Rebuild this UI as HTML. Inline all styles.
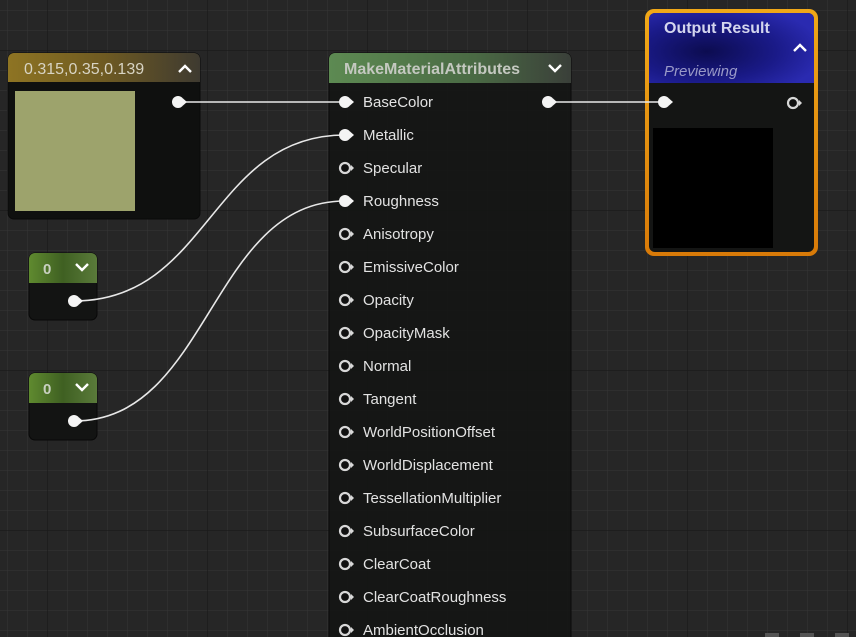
<!DOCTYPE html>
<html><head><meta charset="utf-8"><style>
html,body{margin:0;padding:0;background:#262626;}
svg{display:block;font-family:"Liberation Sans",sans-serif;}
</style></head><body>
<svg width="856" height="637" viewBox="0 0 856 637" xmlns="http://www.w3.org/2000/svg">
<defs>
<pattern id="minor" x="7" y="10" width="20" height="20" patternUnits="userSpaceOnUse">
<path d="M0 0H20M0 0V20" stroke="#363636" stroke-width="1" fill="none"/>
</pattern>
<pattern id="major" x="47" y="50" width="160" height="160" patternUnits="userSpaceOnUse">
<path d="M0 0H160M0 0V160" stroke="#191919" stroke-width="1.2" fill="none"/>
</pattern>
<linearGradient id="gold" x1="0" y1="0" x2="1" y2="0">
<stop offset="0" stop-color="#8e7423"/><stop offset="0.5" stop-color="#6e5a22"/><stop offset="1" stop-color="#3e3a30"/>
</linearGradient>
<linearGradient id="green" x1="0" y1="0" x2="1" y2="0">
<stop offset="0" stop-color="#5d8a52"/><stop offset="0.6" stop-color="#4a6a44"/><stop offset="1" stop-color="#3a3f39"/>
</linearGradient>
<linearGradient id="lgreen" x1="0" y1="0" x2="1" y2="0">
<stop offset="0" stop-color="#5f8a2f"/><stop offset="0.5" stop-color="#3f6022"/><stop offset="1" stop-color="#5a7a3a"/>
</linearGradient>
<radialGradient id="blue" cx="0.35" cy="0.55" r="0.7">
<stop offset="0" stop-color="#0c0c50"/><stop offset="0.6" stop-color="#1a1a88"/><stop offset="1" stop-color="#2a2ab0"/>
</radialGradient>
<linearGradient id="orange" x1="0" y1="0" x2="0" y2="1">
<stop offset="0" stop-color="#f0a818"/><stop offset="1" stop-color="#d87a08"/>
</linearGradient>
</defs>
<rect width="856" height="637" fill="#262626"/>
<rect width="856" height="637" fill="url(#minor)"/>
<rect width="856" height="637" fill="url(#major)"/>

<!-- color node -->
<rect x="8" y="53" width="192" height="166" rx="6" fill="#0f100f" stroke="#0a0a0a"/>
<path d="M14 53H194a6 6 0 0 1 6 6V82H8V59a6 6 0 0 1 6-6z" fill="url(#gold)"/>
<text x="24" y="74" font-size="16" fill="#d8d4c4">0.315,0.35,0.139</text>
<path d="M179 72L185 66L191 72" stroke="#fff" stroke-width="2.4" fill="none"/>
<rect x="15" y="91" width="120" height="120" fill="#9da36c"/>

<!-- zero nodes -->
<g>
<rect x="29" y="253" width="68" height="67" rx="6" fill="#131413" stroke="#080808"/>
<path d="M35 253H91a6 6 0 0 1 6 6V283H29V259a6 6 0 0 1 6-6z" fill="url(#lgreen)"/>
<text x="43" y="274" font-size="15" fill="#c8d0c0" font-weight="bold">0</text>
<path d="M76 264L82 270L88 264" stroke="#fff" stroke-width="2.4" fill="none"/>
<rect x="29" y="373" width="68" height="67" rx="6" fill="#131413" stroke="#080808"/>
<path d="M35 373H91a6 6 0 0 1 6 6V403H29V379a6 6 0 0 1 6-6z" fill="url(#lgreen)"/>
<text x="43" y="394" font-size="15" fill="#c8d0c0" font-weight="bold">0</text>
<path d="M76 384L82 390L88 384" stroke="#fff" stroke-width="2.4" fill="none"/>
</g>

<!-- MakeMaterialAttributes -->
<rect x="329" y="53" width="242" height="600" rx="6" fill="#141514" fill-opacity="0.93" stroke="#0a0a0a"/>
<path d="M335 53H565a6 6 0 0 1 6 6V83H329V59a6 6 0 0 1 6-6z" fill="url(#green)"/>
<text x="344" y="74" font-size="16" font-weight="bold" fill="#c4c8c0">MakeMaterialAttributes</text>
<path d="M549 65L555 71L561 65" stroke="#fff" stroke-width="2.4" fill="none"/>

<g font-size="15" fill="#e2e2e2">
<text x="363" y="107">BaseColor</text>
<text x="363" y="140">Metallic</text>
<text x="363" y="173">Specular</text>
<text x="363" y="206">Roughness</text>
<text x="363" y="239">Anisotropy</text>
<text x="363" y="272">EmissiveColor</text>
<text x="363" y="305">Opacity</text>
<text x="363" y="338">OpacityMask</text>
<text x="363" y="371">Normal</text>
<text x="363" y="404">Tangent</text>
<text x="363" y="437">WorldPositionOffset</text>
<text x="363" y="470">WorldDisplacement</text>
<text x="363" y="503">TessellationMultiplier</text>
<text x="363" y="536">SubsurfaceColor</text>
<text x="363" y="569">ClearCoat</text>
<text x="363" y="602">ClearCoatRoughness</text>
<text x="363" y="635">AmbientOcclusion</text>
</g>

<!-- Output Result -->
<rect x="645" y="9" width="173" height="247" rx="9" fill="url(#orange)"/>
<rect x="649" y="13" width="165" height="239" rx="6" fill="#141514"/>
<path d="M655 13H808a6 6 0 0 1 6 6V83H649V19a6 6 0 0 1 6-6z" fill="url(#blue)"/>
<text x="664" y="33" font-size="16" font-weight="bold" fill="#d4d6ee">Output Result</text>
<path d="M794 51L800 45L806 51" stroke="#fff" stroke-width="2.4" fill="none"/>
<text x="664" y="76" font-size="15" font-style="italic" fill="#9a9ac8">Previewing</text>
<rect x="653" y="128" width="120" height="120" fill="#000"/>

<!-- wires -->
<g stroke="#e8e8e8" stroke-width="1.6" fill="none">
<path d="M178 102H345"/>
<path d="M74 301C210 301 210 135 345 135"/>
<path d="M74 421C210 421 210 201 345 201"/>
<path d="M548 102H664"/>
</g>

<!-- filled pins -->
<g fill="#f4f4f4">
<circle cx="345" cy="102" r="6"/><path d="M350 98.5L354 102L350 105.5z"/>
<circle cx="345" cy="135" r="6"/><path d="M350 131.5L354 135L350 138.5z"/>
<circle cx="345" cy="201" r="6"/><path d="M350 197.5L354 201L350 204.5z"/>
<circle cx="178" cy="102" r="6"/><path d="M183 98.5L187 102L183 105.5z"/>
<circle cx="548" cy="102" r="6"/><path d="M553 98.5L557 102L553 105.5z"/>
<circle cx="74" cy="301" r="6"/><path d="M79 297.5L83 301L79 304.5z"/>
<circle cx="74" cy="421" r="6"/><path d="M79 417.5L83 421L79 424.5z"/>
<circle cx="664" cy="102" r="6"/><path d="M669 98.5L673 102L669 105.5z"/>
</g>
<!-- hollow pins -->
<g fill="#111" stroke="#d8d8d8" stroke-width="2.2">
<circle cx="345" cy="168" r="5"/>
<circle cx="345" cy="234" r="5"/>
<circle cx="345" cy="267" r="5"/>
<circle cx="345" cy="300" r="5"/>
<circle cx="345" cy="333" r="5"/>
<circle cx="345" cy="366" r="5"/>
<circle cx="345" cy="399" r="5"/>
<circle cx="345" cy="432" r="5"/>
<circle cx="345" cy="465" r="5"/>
<circle cx="345" cy="498" r="5"/>
<circle cx="345" cy="531" r="5"/>
<circle cx="345" cy="564" r="5"/>
<circle cx="345" cy="597" r="5"/>
<circle cx="345" cy="630" r="5"/>
<circle cx="793" cy="103" r="5"/>
</g>
<g fill="#d8d8d8">
<path d="M351 165L354 168L351 171z"/><path d="M351 231L354 234L351 237z"/>
<path d="M351 264L354 267L351 270z"/><path d="M351 297L354 300L351 303z"/>
<path d="M351 330L354 333L351 336z"/><path d="M351 363L354 366L351 369z"/>
<path d="M351 396L354 399L351 402z"/><path d="M351 429L354 432L351 435z"/>
<path d="M351 462L354 465L351 468z"/><path d="M351 495L354 498L351 501z"/>
<path d="M351 528L354 531L351 534z"/><path d="M351 561L354 564L351 567z"/>
<path d="M351 594L354 597L351 600z"/><path d="M351 627L354 630L351 633z"/>
<path d="M799 100L802 103L799 106z"/>
</g>

<rect x="765" y="633" width="14" height="4" fill="#555"/>
<rect x="800" y="633" width="14" height="4" fill="#555"/>
<rect x="835" y="633" width="14" height="4" fill="#555"/>
</svg>
</body></html>
